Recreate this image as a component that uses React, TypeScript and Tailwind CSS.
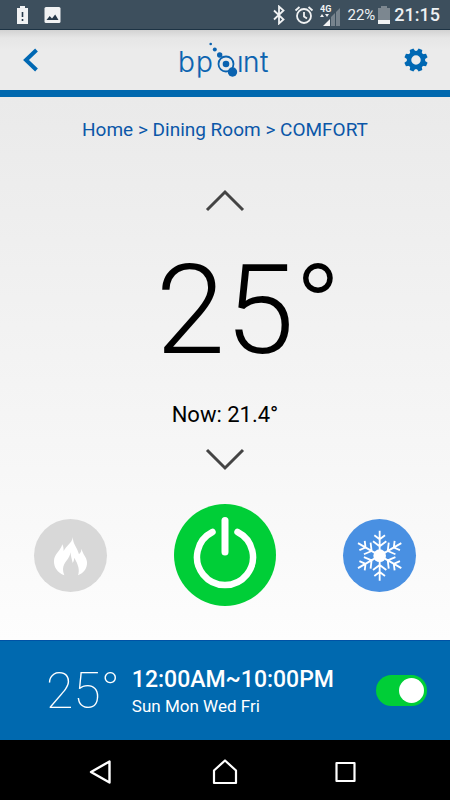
import { useState } from "react";

const GEAR_ANGLES = [22.5, 67.5, 112.5, 157.5, 202.5, 247.5, 292.5, 337.5];
const ARM_ANGLES = [0, 60, 120, 180, 240, 300];

function StatusBar() {
  return (
    <div className="flex h-[30px] shrink-0 items-center justify-between border-b border-[#1d3344] bg-[#3d4f5d] pl-4 pr-[10px] text-[#eef1f3]">
      <div className="flex items-center gap-[15px]">
        <svg width="13" height="20" viewBox="0 0 13 20" aria-label="Battery alert">
          <path d="M4 1h5v2h3v16H1V3h3z" fill="#f1f2f3" />
          <path d="M6.5 7v5M6.5 14v2" stroke="#26394a" strokeWidth="1.6" />
        </svg>
        <svg width="17" height="18" viewBox="0 0 17 18" aria-label="Screenshot">
          <rect x="0.5" y="1" width="16" height="16" rx="1.5" fill="#f1f2f3" />
          <path d="M2.5 14l3.2-4 2.3 2.4L11.200 8.500 14.500 14z" fill="#26394a" />
        </svg>
      </div>
      <div className="flex items-center">
        <svg width="14" height="20" viewBox="0 0 14 20" aria-label="Bluetooth" fill="none" stroke="#f1f2f3" strokeWidth="1.8">
          <path d="M2 5.500l9.500 9L7 18.500V1.500l4.500 4L2 14.500" />
        </svg>
        <svg className="ml-2" width="20" height="20" viewBox="0 0 20 20" aria-label="Alarm" fill="none" stroke="#f1f2f3" strokeWidth="1.8">
          <circle cx="10" cy="11" r="7" />
          <path d="M10 7v4.500l3 2M1.500 5.500l4-3.500M18.500 5.500l-4-3.500" />
        </svg>
        <svg className="ml-[6px]" width="21" height="22" viewBox="0 0 21 22" aria-label="4G signal">
          <path d="M16 8l4-4v18h-4zM11 13l4-4v13h-4z" fill="#77838d" />
          <path d="M3 22l7-7v7z" fill="#f1f2f3" />
          <path d="M0 13l2-3 2 3zM5 10h4l-2 3z" fill="#f1f2f3" />
          <text x="0" y="8" fontSize="9" fontWeight="700" fontFamily="Roboto, sans-serif" fill="#f1f2f3">4G</text>
        </svg>
        <span className="ml-[6px] text-[15px] leading-5">22%</span>
        <svg className="ml-[3px]" width="12" height="20" viewBox="0 0 12 20" aria-label="Battery">
          <path d="M3 1h6v2h3v12H0V3h3z" fill="#7c8790" />
          <path d="M0 15h12v4H0z" fill="#f1f2f3" />
        </svg>
        <span className="ml-1 text-[18px] font-medium leading-5">21:15</span>
      </div>
    </div>
  );
}

function Logo() {
  return (
    <svg width="94" height="40" viewBox="178 40 94 40" role="img" aria-label="bpoint" fill="#0b63b0">
      <g fontFamily="Inter, sans-serif" fontWeight="300" fontSize="28" stroke="#0b63b0" strokeWidth="0.2">
        <text x="178" y="72">b</text>
        <text x="196" y="72">p</text>
        <text x="237" y="72">ı</text>
        <text x="243" y="72">n</text>
        <text x="260" y="72">t</text>
      </g>
      <circle cx="226" cy="64" r="7.500" fill="none" stroke="#0b63b0" strokeWidth="1.800" />
      <circle cx="226" cy="64" r="3.300" />
      <circle cx="232.500" cy="72" r="4.700" />
      <circle cx="219.700" cy="55" r="2.700" />
      <circle cx="214.800" cy="49.500" r="2" />
      <circle cx="210.700" cy="44" r="1.300" />
    </svg>
  );
}

function Header() {
  return (
    <header className="grid h-[67px] shrink-0 grid-cols-[1fr_auto_1fr] items-center border-b-[7px] border-[#0068ae] bg-[linear-gradient(#d2d2d2,#e6e6e6_8px,#ebebeb_20px)] px-[22px]">
      <button type="button" aria-label="Back" className="justify-self-start">
        <svg className="block" width="18" height="24" viewBox="0 0 18 24" fill="none" stroke="#0068b3" strokeWidth="4">
          <path d="M14.500 2L4 12l10.500 10" />
        </svg>
      </button>
      <Logo />
      <button type="button" aria-label="Settings" className="justify-self-end">
        <svg className="block" width="24" height="24" viewBox="-12 -12 24 24">
          <circle r="7" fill="none" stroke="#0068b3" strokeWidth="4.500" />
          {GEAR_ANGLES.map((a) => (
            <path key={a} d="M-2.800-8L-2-11.700H2L2.800-8z" fill="#0068b3" transform={`rotate(${a})`} />
          ))}
        </svg>
      </button>
    </header>
  );
}

function Chevron({ down = false }: { down?: boolean }) {
  return (
    <svg className="block" width="40" height="24" viewBox="0 0 40 24" fill="none" stroke="#444" strokeWidth="3">
      <path d={down ? "M2 2l18 18L38 2" : "M2 22L20 4l18 18"} />
    </svg>
  );
}

function Snowflake() {
  return (
    <svg className="block size-full" viewBox="355 55 219 219" fill="none" stroke="#fff" strokeWidth="5.500">
      <circle cx="465" cy="165" r="19" fill="#fff" stroke="none" />
      {ARM_ANGLES.map((a) => (
        <path key={a} d="M465 165V90M449 104l16 12 16-12M445 122l20 15 20-15" transform={`rotate(${a} 465 165)`} />
      ))}
    </svg>
  );
}

function Modes() {
  const [on, setOn] = useState(true);
  return (
    <div className="flex items-center justify-between px-[34px]">
      <button type="button" aria-label="Heating" className="size-[73px] rounded-full bg-[#d8d8d8]">
        <svg className="block size-full" viewBox="42 55 219 219" fill="#fff">
          <path d="M159 109C157 128 171 138 177 161Q184 155 185 144C187 160 200 168 201 184C202 204 191 217 174 224C180 208 175 193 163 171Q162 181 158 187Q153 168 151 155C150 176 130 183 129 205Q129 216 133 224C112 215 101 199 102 180C103 160 121 152 127 131Q132 140 131 151C139 135 154 130 159 109z" />
        </svg>
      </button>
      <button type="button" aria-label="Power" aria-pressed={on} onClick={() => setOn(!on)} className="size-[102px] rounded-full bg-[#00ce37]">
        <svg className="block size-full" viewBox="174 504 102 102" fill="none" stroke="#fff" strokeWidth="6.500" strokeLinecap="round">
          <path d="M212.500 532A28 28 0 1 0 237.500 532" />
          <path d="M225 520.500V552" strokeWidth="7" />
        </svg>
      </button>
      <button type="button" aria-label="Cooling" className="size-[73px] rounded-full bg-[#4990e2]">
        <Snowflake />
      </button>
    </div>
  );
}

function Schedule() {
  const [enabled, setEnabled] = useState(true);
  return (
    <section className="flex h-[100px] shrink-0 items-center border-t border-[#0052a5] bg-[#0069af] pl-[46px] pr-[23px] text-white">
      <span className="text-[50px] font-thin leading-[60px]">25°</span>
      <label htmlFor="schedule" className="ml-3 flex-1 pt-0.5">
        <span className="block text-[23px] font-medium leading-7">12:00AM~10:00PM</span>
        <span className="block text-[17px] leading-6">Sun Mon Wed Fri</span>
      </label>
      <input
        id="schedule"
        type="checkbox"
        role="switch"
        checked={enabled}
        onChange={() => setEnabled(!enabled)}
        className="h-[31px] w-[51px] appearance-none rounded-full bg-[#7a8a96] p-[3px] before:block before:size-[25px] before:rounded-full before:bg-white checked:bg-[#00ce37] checked:before:ml-5"
      />
    </section>
  );
}

function NavBar() {
  return (
    <nav className="flex h-[60px] shrink-0 items-center justify-center gap-[97px] bg-black pt-1">
      <button type="button" aria-label="Back">
        <svg className="block" width="26" height="26" viewBox="0 0 26 26" fill="none" stroke="#fff" strokeWidth="2.400" strokeLinejoin="round">
          <path d="M20.500 2.500v21L2 13z" />
        </svg>
      </button>
      <button type="button" aria-label="Home">
        <svg className="block" width="26" height="26" viewBox="0 0 26 26" fill="none" stroke="#fff" strokeWidth="2.200" strokeLinejoin="round">
          <path d="M2 24V11.500L13 1.500l11 10V24z" />
        </svg>
      </button>
      <button type="button" aria-label="Recent apps">
        <svg className="block" width="26" height="26" viewBox="0 0 26 26" fill="none" stroke="#fff" strokeWidth="2.200" strokeLinejoin="round">
          <path d="M1.500 4h18v18h-18z" />
        </svg>
      </button>
    </nav>
  );
}

export default function App() {
  return (
    <div className="flex min-h-screen flex-col font-[Roboto,sans-serif]">
      <StatusBar />
      <Header />
      <main className="flex flex-1 flex-col justify-between bg-linear-to-b from-[#eaeaea] to-[#fdfdfd] pb-[34px] pt-[21px]">
        <nav aria-label="Breadcrumb" className="text-center text-[19px] leading-6 text-[#0b57a8]">
          <a href="#home">Home</a> &gt; <a href="#dining-room">Dining Room</a> &gt; <a href="#comfort">COMFORT</a>
        </nav>
        <div className="flex flex-col items-center pt-[14px] text-black">
          <button type="button" aria-label="Warmer"><Chevron /></button>
          <div className="mt-[29px] flex text-[125px] font-light leading-[140px]">
            25<span className="w-0">°</span>
          </div>
          <p className="mt-5 text-[22px] leading-7">Now: 21.4°</p>
          <button type="button" aria-label="Cooler" className="mt-[19px]"><Chevron down /></button>
        </div>
        <Modes />
      </main>
      <Schedule />
      <NavBar />
    </div>
  );
}
